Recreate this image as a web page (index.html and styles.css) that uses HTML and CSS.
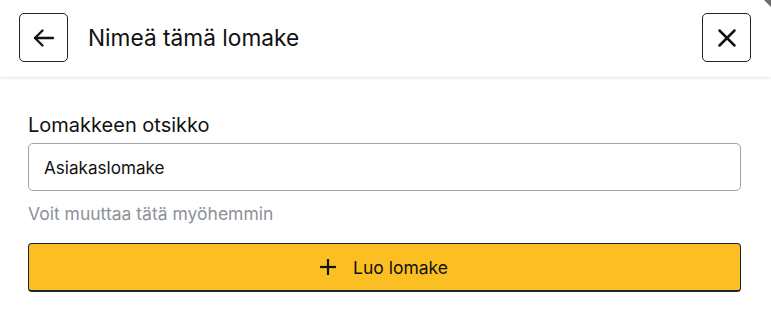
FILE: index.html
```html
<!DOCTYPE html>
<html lang="fi">
<head>
<meta charset="utf-8">
<title>Nimeä tämä lomake</title>
<link rel="stylesheet" href="styles.css">
</head>
<body>
<div class="dialog">
  <header class="header">
    <button class="icon-btn" aria-label="Takaisin">
      <svg width="24" height="24" viewBox="0 0 24 24" fill="none" stroke="currentColor" stroke-width="2.3" stroke-linecap="round" stroke-linejoin="round"><path d="M21 12H3"/><path d="M10.5 4.5L3 12l7.5 7.5"/></svg>
    </button>
    <h1 class="title">Nimeä tämä lomake</h1>
    <button class="icon-btn close" aria-label="Sulje">
      <svg width="24" height="24" viewBox="0 0 24 24" fill="none" stroke="currentColor" stroke-width="2.5" stroke-linecap="round"><path d="M4.5 4.5l15 15"/><path d="M19.5 4.5l-15 15"/></svg>
    </button>
  </header>
  <main class="content">
    <label class="label" for="t">Lomakkeen otsikko</label>
    <input id="t" class="input" type="text" value="Asiakaslomake">
    <p class="help">Voit muuttaa tätä myöhemmin</p>
    <button class="primary">
      <svg width="18" height="18" viewBox="0 0 18 18" fill="none" stroke="currentColor" stroke-width="2.2"><path d="M9 1v16"/><path d="M1 9h16"/></svg>
      <span>Luo lomake</span>
    </button>
  </main>
  <span class="corner"></span>
</div>
</body>
</html>
```
FILE: styles.css
```css
* { box-sizing: border-box; }
html, body { margin: 0; padding: 0; background: #fff; }
body {
  font-family: Inter, "Noto Sans", sans-serif;
  color: #111827;
  width: 771px;
  height: 327px;
  overflow: hidden;
}
.dialog { position: relative; height: 100%; }
.header {
  height: 77px;
  display: flex;
  align-items: center;
  padding: 0 20px 2px 19px;
  box-shadow: 0 1px 3px rgba(0,0,0,0.12);
  position: relative;
}
.icon-btn {
  width: 49px;
  height: 49px;
  border: 1px solid #1f2433;
  border-radius: 5px;
  background: #fff;
  color: #111;
  display: flex;
  align-items: center;
  justify-content: center;
  padding: 0;
  flex: none;
}
.title {
  margin: 0 0 0 20px;
  font-size: 22.7px;
  font-weight: 400;
  color: #111;
  flex: 1;
}
.content {
  padding: 36px 30px 0 28px;
  display: flex;
  flex-direction: column;
}
.label {
  font-size: 20px;
  color: #111;
  line-height: 24px;
  margin-bottom: 6px;
}
.input {
  height: 48px;
  border: 1px solid #9ca3af;
  border-radius: 5px;
  padding: 0 15px;
  font-family: inherit;
  font-size: 17.1px;
  color: #111;
  outline: none;
}
.help {
  margin: 12px 0 0;
  font-size: 17.5px;
  line-height: 21px;
  color: #8d919a;
  font-weight: 400;
}
.primary {
  margin-top: 19px;
  height: 49px;
  background: #fbbf24;
  border: 1px solid #1f2433;
  border-bottom-width: 2px;
  border-radius: 4px;
  display: flex;
  align-items: center;
  justify-content: center;
  gap: 16px;
  font-family: inherit;
  font-size: 17.5px;
  color: #111;
  padding: 0;
}
.primary svg { margin-left: -2px; }
.corner {
  position: absolute;
  top: 0;
  right: 0;
  width: 0;
  height: 0;
  border-top: 7px solid #6b6b70;
  border-left: 7px solid transparent;
}
```
